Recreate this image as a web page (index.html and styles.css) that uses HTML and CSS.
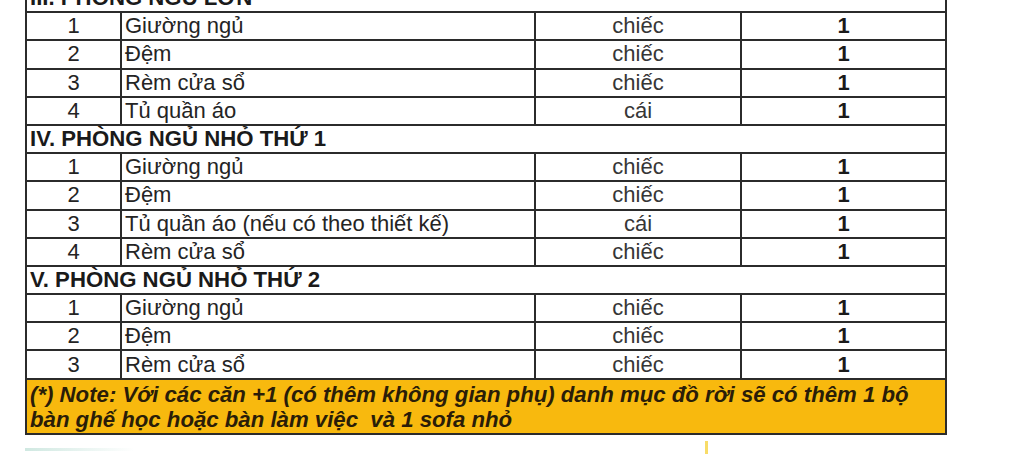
FILE: index.html
```html
<!DOCTYPE html>
<html lang="vi">
<head>
<meta charset="utf-8">
<link rel="stylesheet" href="styles.css">
</head>
<body>
<div class="page">
  <table class="list">
    <colgroup>
      <col class="c-no"><col class="c-name"><col class="c-unit"><col class="c-qty">
    </colgroup>
    <tr class="sec"><td colspan="4">III. PHÒNG NGỦ LỚN</td></tr>
    <tr><td class="no">1</td><td class="name">Giường ngủ</td><td class="unit">chiếc</td><td class="qty">1</td></tr>
    <tr><td class="no">2</td><td class="name">Đệm</td><td class="unit">chiếc</td><td class="qty">1</td></tr>
    <tr><td class="no">3</td><td class="name">Rèm cửa sổ</td><td class="unit">chiếc</td><td class="qty">1</td></tr>
    <tr><td class="no">4</td><td class="name">Tủ quần áo</td><td class="unit">cái</td><td class="qty">1</td></tr>
    <tr class="sec"><td colspan="4">IV. PHÒNG NGỦ NHỎ THỨ 1</td></tr>
    <tr><td class="no">1</td><td class="name">Giường ngủ</td><td class="unit">chiếc</td><td class="qty">1</td></tr>
    <tr><td class="no">2</td><td class="name">Đệm</td><td class="unit">chiếc</td><td class="qty">1</td></tr>
    <tr><td class="no">3</td><td class="name">Tủ quần áo (nếu có theo thiết kế)</td><td class="unit">cái</td><td class="qty">1</td></tr>
    <tr><td class="no">4</td><td class="name">Rèm cửa sổ</td><td class="unit">chiếc</td><td class="qty">1</td></tr>
    <tr class="sec"><td colspan="4">V. PHÒNG NGỦ NHỎ THỨ 2</td></tr>
    <tr><td class="no">1</td><td class="name">Giường ngủ</td><td class="unit">chiếc</td><td class="qty">1</td></tr>
    <tr><td class="no">2</td><td class="name">Đệm</td><td class="unit">chiếc</td><td class="qty">1</td></tr>
    <tr><td class="no">3</td><td class="name">Rèm cửa sổ</td><td class="unit">chiếc</td><td class="qty">1</td></tr>
    <tr class="note"><td colspan="4">(*) Note: Với các căn +1 (có thêm không gian phụ) danh mục đồ rời sẽ có thêm 1 bộ<br>bàn ghế học hoặc bàn làm việc&nbsp; và 1 sofa nhỏ</td></tr>
  </table>
  <div class="tail">
    <span class="mark-green"></span>
    <span class="mark-yellow"></span>
  </div>
</div>
</body>
</html>
```

FILE: styles.css
```css
html, body {
  margin: 0;
  padding: 0;
  background: #ffffff;
}
body {
  width: 1024px;
  height: 454px;
  overflow: hidden;
  font-family: "Liberation Sans", Arial, sans-serif;
  color: #242424;
}
.page {
  padding-left: 25px;
}
.list {
  border-collapse: collapse;
  width: 920px;
  margin-top: -17px;
  table-layout: fixed;
}
.c-no { width: 95px; }
.c-name { width: 414px; }
.c-unit { width: 206px; }
.c-qty { width: 205px; }
.list td {
  border: 2px solid #2b2b2b;
  height: 26.2px;
  padding: 0 4px;
  font-size: 22px;
  line-height: 24px;
  white-space: nowrap;
  overflow: hidden;
  vertical-align: middle;
}
.list td.no { text-align: center; padding: 0; }
.list td.name { padding-left: 3px; }
.list td.unit { text-align: center; color: #363636; }
.list td.qty { text-align: center; font-weight: bold; color: #1a1a1a; }
.sec td {
  font-weight: bold;
  font-size: 22.2px;
  padding-left: 3px;
  color: #1a1a1a;
}
.note td {
  background: #f8b90e;
  font-weight: bold;
  font-style: italic;
  font-size: 22.2px;
  line-height: 25px;
  height: 52px;
  padding: 1px 4px 0 3px;
  color: #2a1d08;
  white-space: normal;
}
.tail {
  position: relative;
  height: 21px;
}
.mark-green {
  position: absolute;
  left: 0;
  top: 13px;
  width: 110px;
  height: 3px;
  background: linear-gradient(90deg, rgba(120,190,170,0.35), rgba(120,190,170,0));
}
.mark-yellow {
  position: absolute;
  left: 680px;
  top: 6px;
  width: 3px;
  height: 15px;
  background: rgba(245, 205, 40, 0.7);
}
```
